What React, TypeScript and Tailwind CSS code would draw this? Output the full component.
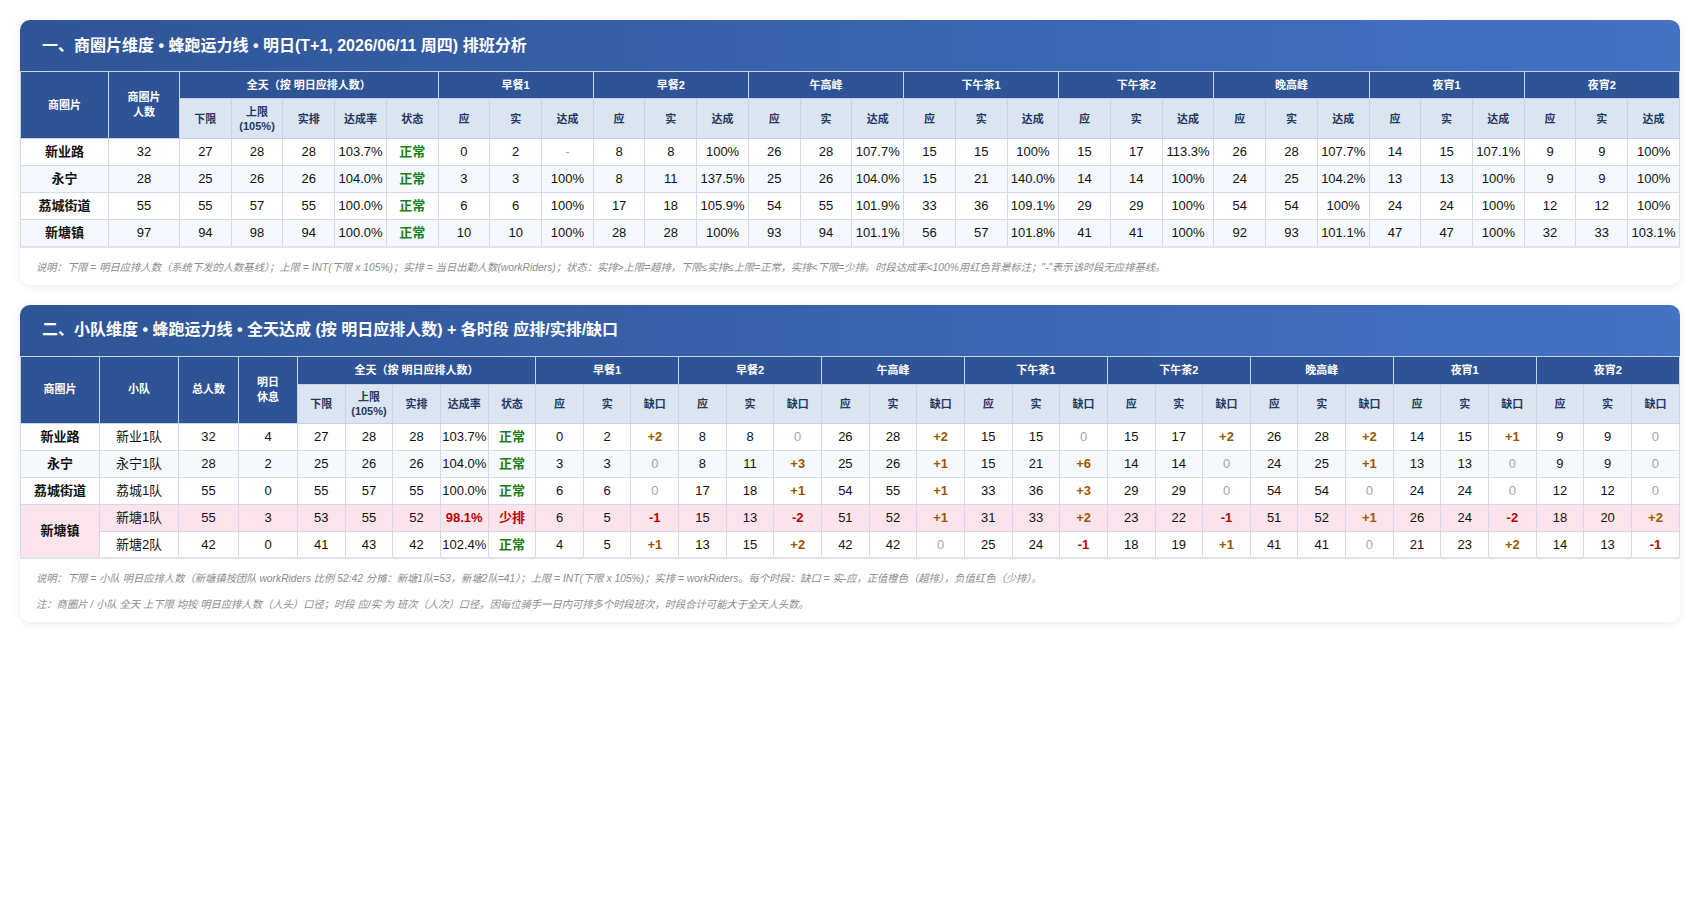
import React from 'react';

const periods = ['早餐1', '早餐2', '午高峰', '下午茶1', '下午茶2', '晚高峰', '夜宵1', '夜宵2'];

// 商圈片维度
const areaRows = [
  { name: '新业路', total: 32, low: 27, high: 28, actual: 28, rate: '103.7%', status: '正常', p: [[0, 2, '-'], [8, 8, '100%'], [26, 28, '107.7%'], [15, 15, '100%'], [15, 17, '113.3%'], [26, 28, '107.7%'], [14, 15, '107.1%'], [9, 9, '100%']] },
  { name: '永宁', total: 28, low: 25, high: 26, actual: 26, rate: '104.0%', status: '正常', p: [[3, 3, '100%'], [8, 11, '137.5%'], [25, 26, '104.0%'], [15, 21, '140.0%'], [14, 14, '100%'], [24, 25, '104.2%'], [13, 13, '100%'], [9, 9, '100%']] },
  { name: '荔城街道', total: 55, low: 55, high: 57, actual: 55, rate: '100.0%', status: '正常', p: [[6, 6, '100%'], [17, 18, '105.9%'], [54, 55, '101.9%'], [33, 36, '109.1%'], [29, 29, '100%'], [54, 54, '100%'], [24, 24, '100%'], [12, 12, '100%']] },
  { name: '新塘镇', total: 97, low: 94, high: 98, actual: 94, rate: '100.0%', status: '正常', p: [[10, 10, '100%'], [28, 28, '100%'], [93, 94, '101.1%'], [56, 57, '101.8%'], [41, 41, '100%'], [92, 93, '101.1%'], [47, 47, '100%'], [32, 33, '103.1%']] },
];

// 小队维度
const teamRows = [
  { area: '新业路', span: 1, team: '新业1队', total: 32, rest: 4, low: 27, high: 28, actual: 28, rate: '103.7%', status: '正常', p: [[0, 2], [8, 8], [26, 28], [15, 15], [15, 17], [26, 28], [14, 15], [9, 9]] },
  { area: '永宁', span: 1, team: '永宁1队', total: 28, rest: 2, low: 25, high: 26, actual: 26, rate: '104.0%', status: '正常', p: [[3, 3], [8, 11], [25, 26], [15, 21], [14, 14], [24, 25], [13, 13], [9, 9]] },
  { area: '荔城街道', span: 1, team: '荔城1队', total: 55, rest: 0, low: 55, high: 57, actual: 55, rate: '100.0%', status: '正常', p: [[6, 6], [17, 18], [54, 55], [33, 36], [29, 29], [54, 54], [24, 24], [12, 12]] },
  { area: '新塘镇', span: 2, team: '新塘1队', total: 55, rest: 3, low: 53, high: 55, actual: 52, rate: '98.1%', status: '少排', p: [[6, 5], [15, 13], [51, 52], [31, 33], [23, 22], [51, 52], [26, 24], [18, 20]] },
  { area: '', span: 0, team: '新塘2队', total: 42, rest: 0, low: 41, high: 43, actual: 42, rate: '102.4%', status: '正常', p: [[4, 5], [13, 15], [42, 42], [25, 24], [18, 19], [41, 41], [21, 23], [14, 13]] },
];

const font = { fontFamily: '"Segoe UI", "Liberation Sans", "Noto Sans CJK SC", sans-serif' };

function Gap({ v }: { v: number }) {
  if (v === 0) return <span className="text-[#a6a6a6]">0</span>;
  if (v > 0) return <span className="font-bold text-[#9c5700]">+{v}</span>;
  return <span className="font-bold text-[#c00000]">{v}</span>;
}

function Status({ s }: { s: string }) {
  return s === '少排'
    ? <span className="font-bold text-[#c00000]">{s}</span>
    : <span className="font-semibold text-[#17801a]">{s}</span>;
}

function Card({ title, children, notes }: { title: string; children: React.ReactNode; notes: string[] }) {
  return (
    <div className="bg-white rounded-[10px] shadow-[0_2px_10px_rgba(0,0,0,0.08)] overflow-hidden">
      <div className="h-[51px] flex items-center px-[22px] bg-gradient-to-r from-[#2f5597] to-[#4472c4] text-white text-[16px] font-bold">
        {title}
      </div>
      {children}
      <div className="px-4 pt-3 pb-[9px] flex flex-col gap-[10px]">
        {notes.map((n) => (
          <p key={n} className="text-[10.3px] leading-4 italic text-[#8c8c8c]">{n}</p>
        ))}
      </div>
    </div>
  );
}

const th1 = 'bg-[#2f5496] text-white text-[11px] font-bold border border-[#c8d2e5] text-center';
const th2 = 'bg-[#dbe5f1] text-[#1f3864] text-[11px] font-bold border border-[#c8d2e5] text-center leading-[14px]';
const td = 'border border-[#d3dbe9] text-center text-[13px] text-[#111] p-0';

export default function App() {
  return (
    <div className="min-h-screen bg-white p-5 flex flex-col gap-5" style={font}>
      {/* 一、商圈片维度 */}
      <Card
        title="一、商圈片维度 • 蜂跑运力线 • 明日(T+1, 2026/06/11 周四) 排班分析"
        notes={['说明：下限 = 明日应排人数（系统下发的人数基线）；上限 = INT(下限 x 105%)；实排 = 当日出勤人数(workRiders)；状态：实排>上限=超排，下限≤实排≤上限=正常，实排<下限=少排。时段达成率<100%用红色背景标注；"-"表示该时段无应排基线。']}
      >
        <table className="w-full table-fixed border-collapse border-b-2 border-b-[#dfe4ec]">
          <colgroup>
            <col className="w-[88px]" />
            <col className="w-[71px]" />
          </colgroup>
          <thead>
            <tr className="h-[27px]">
              <th rowSpan={2} className={th1}>商圈片</th>
              <th rowSpan={2} className={`${th1} leading-[15px]`}>商圈片<br />人数</th>
              <th colSpan={5} className={th1}>全天（按 明日应排人数）</th>
              {periods.map((p) => (
                <th key={p} colSpan={3} className={th1}>{p}</th>
              ))}
            </tr>
            <tr className="h-[40px]">
              <th className={th2}>下限</th>
              <th className={th2}>上限<br />(105%)</th>
              <th className={th2}>实排</th>
              <th className={th2}>达成率</th>
              <th className={th2}>状态</th>
              {periods.map((p) => (
                <React.Fragment key={p}>
                  <th className={th2}>应</th>
                  <th className={th2}>实</th>
                  <th className={th2}>达成</th>
                </React.Fragment>
              ))}
            </tr>
          </thead>
          <tbody>
            {areaRows.map((r, i) => (
              <tr key={r.name} className={`h-[27px] ${i % 2 ? 'bg-[#f5f8fc]' : 'bg-white'}`}>
                <td className={`${td} font-bold`}>{r.name}</td>
                <td className={td}>{r.total}</td>
                <td className={td}>{r.low}</td>
                <td className={td}>{r.high}</td>
                <td className={td}>{r.actual}</td>
                <td className={td}>{r.rate}</td>
                <td className={td}><Status s={r.status} /></td>
                {r.p.map((c, j) => (
                  <React.Fragment key={j}>
                    <td className={td}>{c[0]}</td>
                    <td className={td}>{c[1]}</td>
                    <td className={`${td} ${c[2] === '-' ? 'text-[#a6a6a6]' : ''}`}>{c[2]}</td>
                  </React.Fragment>
                ))}
              </tr>
            ))}
          </tbody>
        </table>
      </Card>

      {/* 二、小队维度 */}
      <Card
        title="二、小队维度 • 蜂跑运力线 • 全天达成 (按 明日应排人数) + 各时段 应排/实排/缺口"
        notes={[
          '说明：下限 = 小队 明日应排人数（新塘镇按团队 workRiders 比例 52:42 分摊：新塘1队=53，新塘2队=41）；上限 = INT(下限 x 105%)；实排 = workRiders。每个时段：缺口 = 实-应，正值橙色（超排），负值红色（少排）。',
          '注：商圈片 / 小队 全天 上下限 均按 明日应排人数（人头）口径；时段 应/实 为 班次（人次）口径，因每位骑手一日内可排多个时段班次，时段合计可能大于全天人头数。',
        ]}
      >
        <table className="w-full table-fixed border-collapse border-b-2 border-b-[#dfe4ec]">
          <colgroup>
            <col className="w-[79px]" />
            <col className="w-[79px]" />
            <col className="w-[60px]" />
            <col className="w-[59px]" />
          </colgroup>
          <thead>
            <tr className="h-[28px]">
              <th rowSpan={2} className={th1}>商圈片</th>
              <th rowSpan={2} className={th1}>小队</th>
              <th rowSpan={2} className={th1}>总人数</th>
              <th rowSpan={2} className={`${th1} leading-[15px]`}>明日<br />休息</th>
              <th colSpan={5} className={th1}>全天（按 明日应排人数）</th>
              {periods.map((p) => (
                <th key={p} colSpan={3} className={th1}>{p}</th>
              ))}
            </tr>
            <tr className="h-[39px]">
              <th className={th2}>下限</th>
              <th className={th2}>上限<br />(105%)</th>
              <th className={th2}>实排</th>
              <th className={th2}>达成率</th>
              <th className={th2}>状态</th>
              {periods.map((p) => (
                <React.Fragment key={p}>
                  <th className={th2}>应</th>
                  <th className={th2}>实</th>
                  <th className={th2}>缺口</th>
                </React.Fragment>
              ))}
            </tr>
          </thead>
          <tbody>
            {teamRows.map((r, i) => {
              const short = r.status === '少排';
              const bg = short ? 'bg-[#fce4ec]' : i % 2 ? 'bg-[#f5f8fc]' : 'bg-white';
              return (
                <tr key={r.team} className={`h-[27px] ${bg}`}>
                  {r.span > 0 && (
                    <td rowSpan={r.span} className={`${td} font-bold ${r.span > 1 ? 'bg-[#fce4ec]' : ''}`}>{r.area}</td>
                  )}
                  <td className={td}>{r.team}</td>
                  <td className={td}>{r.total}</td>
                  <td className={td}>{r.rest}</td>
                  <td className={td}>{r.low}</td>
                  <td className={td}>{r.high}</td>
                  <td className={td}>{r.actual}</td>
                  <td className={`${td} ${short ? 'font-bold text-[#c00000]' : ''}`}>{r.rate}</td>
                  <td className={td}><Status s={r.status} /></td>
                  {r.p.map((c, j) => (
                    <React.Fragment key={j}>
                      <td className={td}>{c[0]}</td>
                      <td className={td}>{c[1]}</td>
                      <td className={td}><Gap v={c[1] - c[0]} /></td>
                    </React.Fragment>
                  ))}
                </tr>
              );
            })}
          </tbody>
        </table>
      </Card>
    </div>
  );
}
